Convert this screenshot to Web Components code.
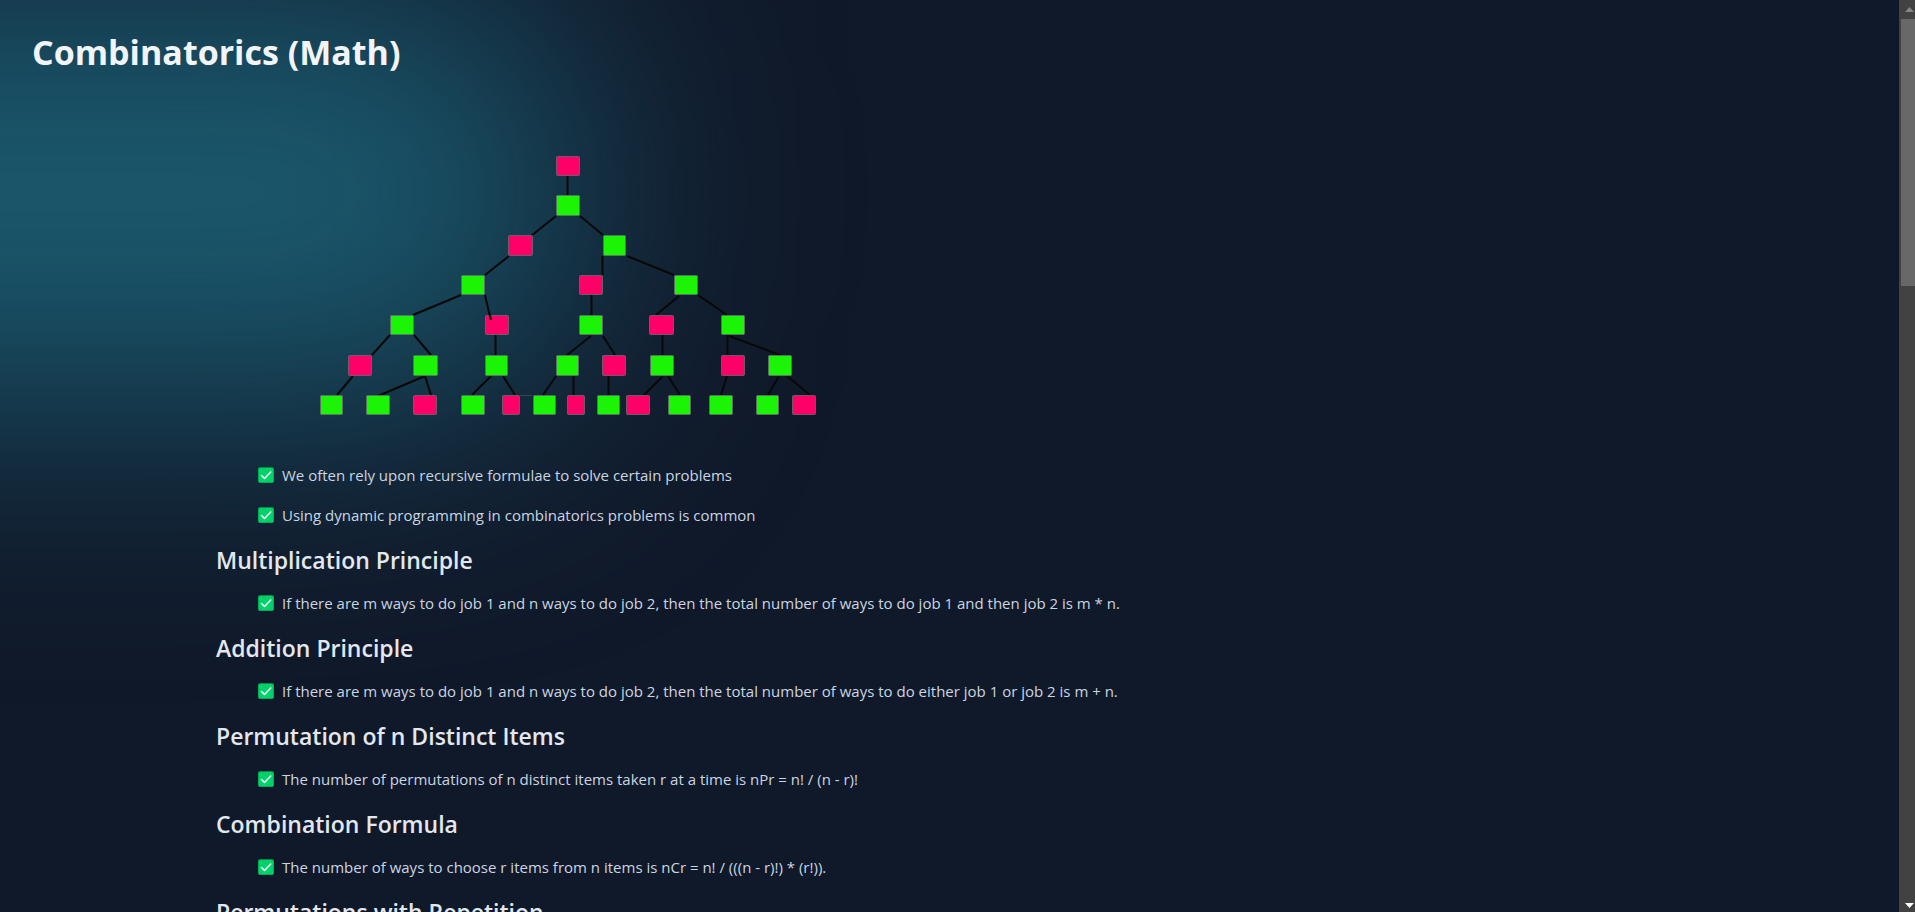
<!DOCTYPE html>
<html lang="en">
<head>
<meta charset="utf-8">
<title>Combinatorics (Math)</title>
<style>
  html, body { margin: 0; height: 100%; }
  body {
    background: #10192a;
    color: #cbd5e1;
    font: 15px/24px "Open Sans", "Noto Sans", sans-serif;
    overflow: hidden;
  }
</style>
</head>
<body>
<page-shell>
  <page-title>Combinatorics (Math)</page-title>
  <article-body>
    <recursion-tree></recursion-tree>
    <note-list>
      <note-item>We often rely upon recursive formulae to solve certain problems</note-item>
      <note-item>Using dynamic programming in combinatorics problems is common</note-item>
    </note-list>
    <topic-section heading="Multiplication Principle">
      <note-item>If there are m ways to do job 1 and n ways to do job 2, then the total number of ways to do job 1 and then job 2 is m * n.</note-item>
    </topic-section>
    <topic-section heading="Addition Principle">
      <note-item>If there are m ways to do job 1 and n ways to do job 2, then the total number of ways to do either job 1 or job 2 is m + n.</note-item>
    </topic-section>
    <topic-section heading="Permutation of n Distinct Items">
      <note-item>The number of permutations of n distinct items taken r at a time is nPr = n! / (n - r)!</note-item>
    </topic-section>
    <topic-section heading="Combination Formula">
      <note-item>The number of ways to choose r items from n items is nCr = n! / (((n - r)!) * (r!)).</note-item>
    </topic-section>
    <topic-section heading="Permutations with Repetition"></topic-section>
  </article-body>
</page-shell>

<script>
  function define(name, html, setup) {
    const template = document.createElement('template');
    template.innerHTML = html;
    customElements.define(name, class extends HTMLElement {
      constructor() {
        super();
        this.attachShadow({ mode: 'open' }).append(template.content.cloneNode(true));
      }
      connectedCallback() {
        if (setup) setup(this, this.shadowRoot);
      }
    });
  }

  define('page-shell', `
    <style>
      :host { display: grid; grid-template-columns: 1fr 16px; height: 100vh; }
      main {
        position: relative;
        isolation: isolate;
        overflow: hidden;
        padding: 32px 32px 0;
      }
      .glow {
        position: absolute;
        z-index: -1;
        top: -16px;
        left: -16%;
        width: 46%;
        height: 416px;
        border-radius: 0 160px 160px 0;
        background: #1b5a6f;
        filter: blur(126px);
      }
    </style>
    <main><div class="glow"></div><slot></slot></main>
    <scroll-rail></scroll-rail>`);

  define('scroll-rail', `
    <style>
      :host { display: flex; flex-direction: column; background: #424242; }
      svg { display: block; width: 16px; height: 19px; flex: none; }
      .track { flex: 1; padding-left: 2px; }
      .thumb { height: 267px; background: #686868; }
    </style>
    <svg viewBox="0 0 16 19" aria-hidden="true"><path d="M6 12 10.500 7 15 12z" fill="#868686"/></svg>
    <div class="track"><div class="thumb"></div></div>
    <svg viewBox="0 0 16 19" aria-hidden="true"><path d="M6 10 10.500 15 15 10z" fill="#fff"/></svg>`);

  define('page-title', `
    <style>
      :host { display: block; }
      h1 { margin: 0; font-size: 34px; line-height: 40px; font-weight: 700; color: #f1f5f9; }
    </style>
    <h1><slot></slot></h1>`);

  define('article-body', `
    <style>
      :host { display: flex; flex-direction: column; gap: 16px; padding: 72px 0 0 184px; }
    </style>
    <slot></slot>`);

  define('topic-section', `
    <style>
      :host { display: flex; flex-direction: column; gap: 16px; }
      h2 { margin: 0; padding-top: 2px; font-size: 23px; line-height: 30px; font-weight: 600; color: #e2e8f0; }
    </style>
    <h2></h2>
    <note-list><slot></slot></note-list>`,
    (host, root) => { root.querySelector('h2').textContent = host.getAttribute('heading'); });

  define('note-list', `
    <style>
      :host { display: block; }
      div { display: flex; flex-direction: column; gap: 16px; padding-left: 42px; }
    </style>
    <div role="list"><slot></slot></div>`);

  define('note-item', `
    <style>
      :host { display: flex; align-items: center; gap: 8px; }
      svg { width: 16px; height: 16px; flex: none; }
    </style>
    <svg viewBox="0 0 16 16" aria-hidden="true">
      <rect width="16" height="16" rx="2" fill="#068a48"/>
      <rect x="0.500" y="1" width="15" height="14.500" rx="1.500" fill="#00d26a"/>
      <path d="M3.500 8.500 6.500 11.500 12.700 5" fill="none" stroke="#fff" stroke-width="1.500" stroke-linecap="round" stroke-linejoin="round"/>
    </svg>
    <span><slot></slot></span>`,
    host => host.setAttribute('role', 'listitem'));

  define('recursion-tree', `
    <style>
      :host { display: block; padding-left: 84px; }
      svg { display: block; width: 520px; height: 303px; }
      .edges { stroke: #080808; stroke-width: 2; fill: none; }
      rect { stroke: #6d6a70; stroke-width: 1; stroke-opacity: .8; }
      .a { fill: #ff0068; }
      .b { fill: #1cf405; }
    </style>
    <svg viewBox="300 144 520 303" role="img" aria-label="Recursion tree">
      <path d="M520 395.500H532" stroke="#3c4650" stroke-width="1"/>
      <path class="edges" d="M567.500 176V195 M556 216 531 236 M580 216 603 235 M509 256 485 275 M602.500 256V275 M627 256 674 275
        M461 295 413 315 M485 295 491 321 M591.500 295V315 M679 296 656 315 M698 295 727 315
        M390 335 372 355 M414 335 431 355 M495.500 335V355 M591 336 567 355 M603 336 615 355 M662.500 335V355 M727.500 335V355 M729 336 780 355
        M353 376 337 395 M425 376 378 396 M425 376 431 395 M491 376 472 395 M503 376 515 395 M556 376 543 395
        M573.500 376V395 M608.500 376V395 M663 376 644 395 M668 376 680 395 M727 376 721 395 M779 376 768 395 M787 376 810 395"/>
      <g class="nodes"></g>
      <path d="M489 312 491 320" stroke="#080808" stroke-width="2"/>
    </svg>`,
    (host, root) => {
      // Each row: top, height, then [left, width, kind] for every node.
      const rows = [
        [156, 20, [[556, 24, 'a']]],
        [195, 21, [[556, 24, 'b']]],
        [235, 21, [[508, 25, 'a'], [603, 23, 'b']]],
        [275, 20, [[461, 24, 'b'], [579, 24, 'a'], [674, 24, 'b']]],
        [315, 20, [[390, 24, 'b'], [485, 24, 'a'], [579, 24, 'b'], [649, 25, 'a'], [721, 24, 'b']]],
        [355, 21, [[348, 24, 'a'], [413, 25, 'b'], [485, 23, 'b'], [556, 23, 'b'], [602, 24, 'a'], [650, 24, 'b'], [721, 24, 'a'], [768, 24, 'b']]],
        [395, 20, [[320, 23, 'b'], [366, 24, 'b'], [413, 24, 'a'], [461, 24, 'b'], [502, 18, 'a'], [533, 23, 'b'], [567, 18, 'a'],
          [597, 23, 'b'], [626, 24, 'a'], [668, 23, 'b'], [709, 24, 'b'], [756, 23, 'b'], [792, 24, 'a']]]
      ];
      root.querySelector('.nodes').innerHTML = rows.map(([y, h, nodes]) => nodes.map(([x, w, kind]) =>
        `<rect class="${kind}" x="${x + 0.5}" y="${y + 0.5}" width="${w - 1}" height="${h - 1}" rx="1"/>`).join('')).join('');
    });
</script>
</body>
</html>
